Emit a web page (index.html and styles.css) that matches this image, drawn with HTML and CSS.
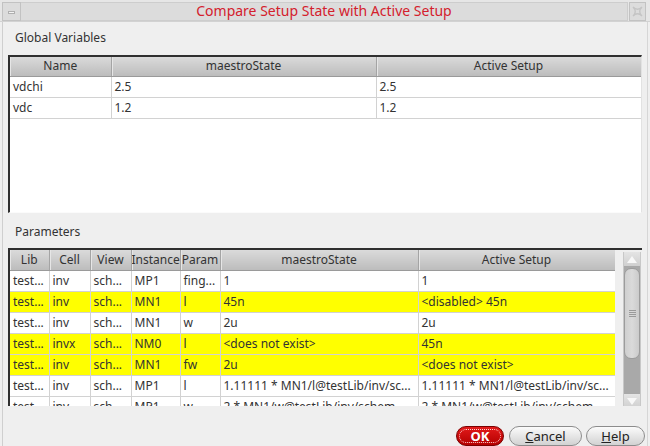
FILE: index.html
```html
<!DOCTYPE html>
<html>
<head>
<meta charset="utf-8">
<link rel="stylesheet" href="styles.css">
</head>
<body>
<div class="window">
  <div class="titlebar">
    <div class="tb-btn tb-min"><span class="dash"></span></div>
    <div class="tb-title">Compare Setup State with Active Setup</div>
    <div class="tb-btn tb-close">
      <svg width="13" height="13" viewBox="0 0 13 13"><path d="M2 2 C5 5 8 5 11 2 M2 11 C5 8 8 8 11 11 M2 2 C5 5 5 8 2 11 M11 2 C8 5 8 8 11 11" fill="none" stroke="#c4c4c4" stroke-width="1.4"/></svg>
    </div>
  </div>
  <div class="main">
    <div class="section-label">Global Variables</div>
    <div class="frame frame-global">
      <table class="grid grid-global">
        <colgroup><col class="c-name"><col class="c-ms"><col class="c-as"></colgroup>
        <thead><tr><th>Name</th><th>maestroState</th><th>Active Setup</th></tr></thead>
        <tbody>
          <tr><td>vdchi</td><td>2.5</td><td>2.5</td></tr>
          <tr><td>vdc</td><td>1.2</td><td>1.2</td></tr>
        </tbody>
      </table>
    </div>
    <div class="section-label label-params">Parameters</div>
    <div class="frame frame-params">
      <div class="tablearea">
        <table class="grid grid-params">
          <colgroup><col class="p-lib"><col class="p-cell"><col class="p-view"><col class="p-inst"><col class="p-param"><col class="p-ms"><col class="p-as"></colgroup>
          <thead><tr><th>Lib</th><th>Cell</th><th>View</th><th>Instance</th><th>Param</th><th>maestroState</th><th>Active Setup</th></tr></thead>
          <tbody>
            <tr><td>test...</td><td>inv</td><td>sch...</td><td>MP1</td><td>fing...</td><td>1</td><td>1</td></tr>
            <tr class="hl"><td>test...</td><td>inv</td><td>sch...</td><td>MN1</td><td>l</td><td>45n</td><td>&lt;disabled&gt; 45n</td></tr>
            <tr><td>test...</td><td>inv</td><td>sch...</td><td>MN1</td><td>w</td><td>2u</td><td>2u</td></tr>
            <tr class="hl"><td>test...</td><td>invx</td><td>sch...</td><td>NM0</td><td>l</td><td>&lt;does not exist&gt;</td><td>45n</td></tr>
            <tr class="hl"><td>test...</td><td>inv</td><td>sch...</td><td>MN1</td><td>fw</td><td>2u</td><td>&lt;does not exist&gt;</td></tr>
            <tr><td>test...</td><td>inv</td><td>sch...</td><td>MP1</td><td>l</td><td>1.11111 * MN1/l@testLib/inv/sc...</td><td>1.11111 * MN1/l@testLib/inv/sc...</td></tr>
            <tr><td>test...</td><td>inv</td><td>sch...</td><td>MP1</td><td>w</td><td>2 * MN1/w@testLib/inv/schem...</td><td>2 * MN1/w@testLib/inv/schem...</td></tr>
          </tbody>
        </table>
      </div>
      <div class="scrollbar">
        <div class="sb-arrow sb-up"><span class="tri tri-up"></span></div>
        <div class="sb-track">
          <div class="sb-thumb"><span class="grip"></span></div>
        </div>
        <div class="sb-arrow sb-down"><span class="tri tri-down"></span></div>
      </div>
    </div>
    <div class="buttons">
      <div class="btn btn-ok"><span class="focus">OK</span></div>
      <div class="btn btn-cancel"><span><u>C</u>ancel</span></div>
      <div class="btn btn-help"><span><u>H</u>elp</span></div>
    </div>
  </div>
</div>
</body>
</html>
```
FILE: styles.css
```css
* { box-sizing: border-box; }
html, body { margin: 0; padding: 0; }
body {
  width: 650px;
  height: 446px;
  overflow: hidden;
  background: #efefef;
  font-family: "Noto Sans", "Liberation Sans", sans-serif;
  font-size: 12px;
  color: #333;
}
.window {
  width: 650px;
  height: 446px;
  display: flex;
  flex-direction: column;
  overflow: hidden;
}
.titlebar {
  height: 22px;
  flex: none;
  display: flex;
  align-items: flex-start;
  padding: 2px 4px 0 2px;
  background: #e6e6e6;
  border-bottom: 1px solid #d2d2d2;
}
.tb-btn {
  height: 19px;
  flex: none;
  display: flex;
  align-items: center;
  justify-content: center;
  background: #dcdcdc;
  border: 1px solid #c2c2c2;
}
.tb-min { width: 19px; }
.tb-close { width: 17px; margin-left: 1px; }
.dash {
  width: 7px;
  height: 3px;
  background: #f4f4f4;
  border: 1px solid #b0b0b0;
  margin-top: 1px;
}
.tb-title {
  flex: 1;
  height: 19px;
  border: 1px solid #cdcdcd;
  border-left: none;
  background: #dcdcdc;
  color: #d4202c;
  font-size: 14px;
  line-height: 16px;
  text-align: center;
}
.main {
  flex: 1;
  display: flex;
  flex-direction: column;
  margin: 0 2px;
  padding: 0 5px;
  border-left: 1px solid #cfcfcf;
  border-right: 1px solid #d6d6d6;
  min-height: 0;
}
.section-label {
  height: 16px;
  line-height: 16px;
  margin: 8px 0 9px 7px;
  color: #333;
  font-size: 12px;
}
.label-params { margin: 11px 0 8px 7px; }
.frame {
  height: 158px;
  flex: none;
  border-top: 2px solid #2f2f2f;
  border-left: 2px solid #2f2f2f;
  overflow: hidden;
}
.frame-global {
  background: #fff;
  border-right: 1px solid #e2e2e2;
  border-bottom: 1px solid #fbfbfb;
}
.frame-params {
  display: flex;
  align-items: flex-start;
  background: #efefef;
}
.tablearea {
  width: 605px;
  height: 156px;
  background: #fff;
  overflow: hidden;
  flex: none;
}
.grid {
  border-collapse: collapse;
  table-layout: fixed;
}
.grid-global { width: 631px; }
.grid-params { width: 605px; }
.c-name { width: 101px; }
.c-ms { width: 265px; }
.c-as { width: 265px; }
.p-lib { width: 39px; }
.p-cell { width: 41px; }
.p-view { width: 41px; }
.p-inst { width: 49px; }
.p-param { width: 40px; }
.p-ms { width: 198px; }
.p-as { width: 197px; }
.grid th {
  height: 19px;
  padding: 0;
  font-weight: normal;
  color: #333;
  text-align: center;
  background: linear-gradient(#dadada, #bcbcbc);
  border-right: 1px solid #a4a4a4;
  border-bottom: 1px solid #9a9a9a;
  box-shadow: inset 1px 0 0 #e6e6e6;
  white-space: nowrap;
  overflow: hidden;
  line-height: 18px;
}
.grid td {
  height: 21px;
  padding: 0 0 0 3px;
  border-right: 1px solid #d2d2d2;
  border-bottom: 1px solid #d2d2d2;
  white-space: nowrap;
  overflow: hidden;
  line-height: 20px;
  color: #333;
}
.grid-params th { height: 20px; }
.grid tr.hl td { background: #ffff00; }
.scrollbar {
  width: 18px;
  height: 156px;
  margin-left: 8px;
  margin-top: 2px;
  flex: none;
  display: flex;
  flex-direction: column;
  background: #dedede;
  border-left: 1px solid #c8c8c8;
  border-right: 1px solid #c8c8c8;
}
.sb-arrow {
  height: 15px;
  flex: none;
  display: flex;
  align-items: center;
  justify-content: center;
  background: linear-gradient(#e4e4e4, #cfcfcf);
}
.sb-up { border-bottom: 1px solid #a8a8a8; }
.sb-down { border-top: 1px solid #a8a8a8; }
.tri {
  width: 0;
  height: 0;
  border-left: 5px solid transparent;
  border-right: 5px solid transparent;
}
.tri-up { border-bottom: 7px solid #f8f8f8; }
.tri-down { border-top: 7px solid #f8f8f8; }
.sb-track {
  flex: 1;
  background: #a9a9a9;
  padding: 1px 0 0 0;
}
.sb-thumb {
  height: 91px;
  background: linear-gradient(90deg, #cfcfcf, #dadada 50%, #cbcbcb);
  border: 1px solid #9c9c9c;
  border-radius: 7px;
  display: flex;
  align-items: center;
  justify-content: center;
}
.grip {
  width: 7px;
  height: 7px;
  background: repeating-linear-gradient(#9a9a9a 0 1px, transparent 1px 2px);
}
.buttons {
  margin-top: 20px;
  margin-right: -3px;
  height: 20px;
  display: flex;
  justify-content: flex-end;
  gap: 4px;
}
.btn {
  height: 20px;
  border-radius: 10px;
  display: flex;
  align-items: center;
  justify-content: center;
  font-size: 13px;
  color: #222;
  border: 1px solid #8c8c8c;
  background: linear-gradient(#fbfbfb, #e2e2e2 60%, #d2d2d2);
}
.btn-ok {
  width: 48px;
  margin-right: 1px;
  background: linear-gradient(#e21b1b, #b40000);
  border-color: #7a0000;
  color: #fff;
  font-weight: bold;
  padding: 2px;
}
.btn-ok .focus {
  width: 100%;
  height: 100%;
  border: 1px dotted #ffd0d0;
  border-radius: 8px;
  display: flex;
  align-items: center;
  justify-content: center;
  line-height: 14px;
}
.btn-cancel { width: 73px; }
.btn-help { width: 59px; }
.btn u { text-decoration: underline; }
```
